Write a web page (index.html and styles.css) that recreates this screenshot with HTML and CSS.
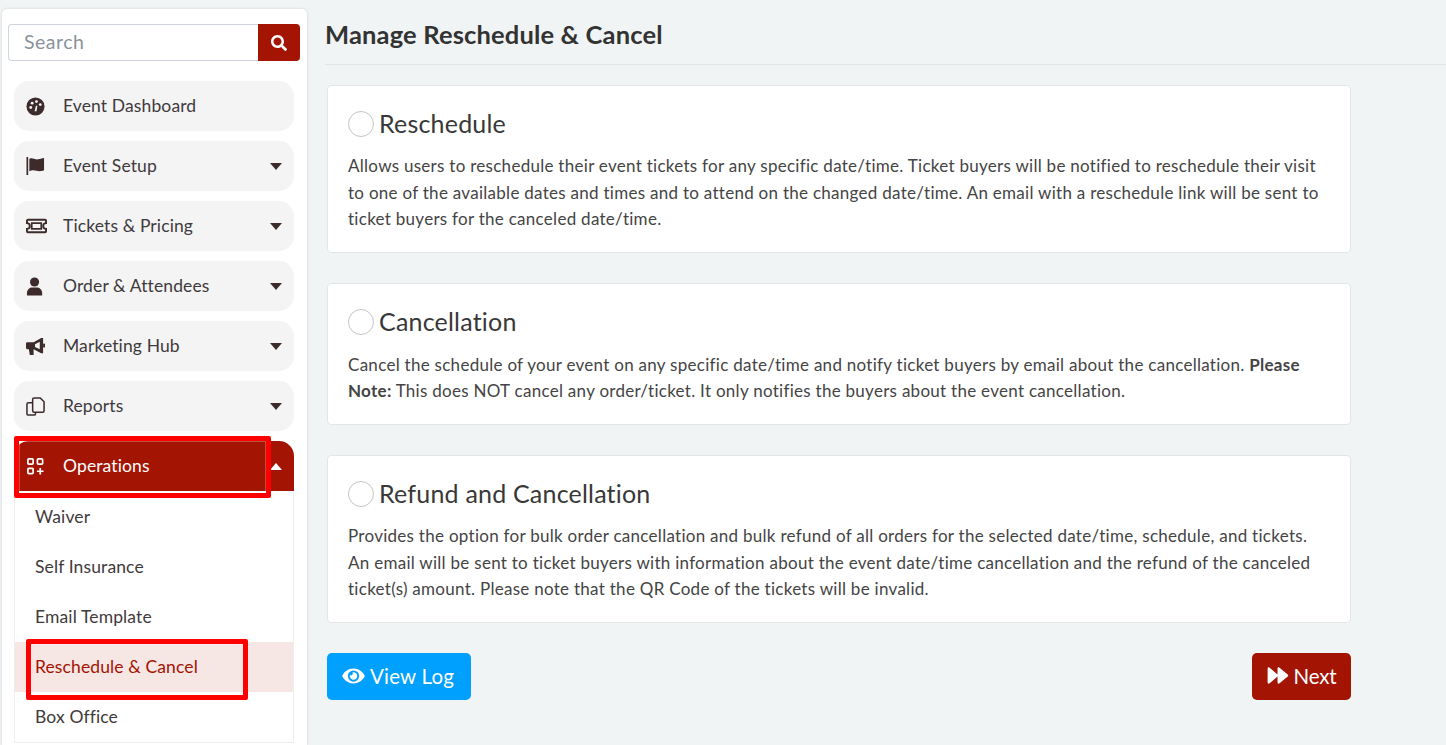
FILE: index.html
```html
<!DOCTYPE html>
<html lang="en">
<head>
<meta charset="utf-8">
<title>Manage Reschedule &amp; Cancel</title>
<link rel="stylesheet" href="styles.css">
</head>
<body>
<aside class="sidebar">
  <form class="search">
    <input class="search-input" type="text" placeholder="Search">
    <button class="search-btn" type="button" aria-label="Search">
      <svg viewBox="0 0 512 512" width="16" height="16"><path fill="#fff" d="M505 442.700L405.300 343c-4.500-4.500-10.600-7-17-7H372c27.600-35.300 44-79.700 44-128C416 93.100 322.900 0 208 0S0 93.100 0 208s93.100 208 208 208c48.300 0 92.700-16.400 128-44v16.300c0 6.400 2.500 12.500 7 17l99.700 99.700c9.400 9.400 24.600 9.400 33.900 0l28.300-28.300c9.400-9.400 9.400-24.600.1-34zM208 336c-70.700 0-128-57.200-128-128 0-70.700 57.200-128 128-128 70.700 0 128 57.200 128 128 0 70.700-57.200 128-128 128z"/></svg>
    </button>
  </form>
  <nav class="menu">
    <a class="item">
      <svg class="ico" viewBox="0 0 20 20"><circle cx="10" cy="10" r="9.500" fill="#3d2b2b"/><circle cx="5" cy="11" r="1.500" fill="#f4f4f5"/><circle cx="6.500" cy="6.500" r="1.500" fill="#f4f4f5"/><circle cx="11" cy="4.800" r="1.500" fill="#f4f4f5"/><circle cx="15" cy="8" r="1.500" fill="#f4f4f5"/><path d="M9 15l1.500-6 1.500.5-1 5.500z" fill="#f4f4f5"/></svg>
      <span class="label">Event Dashboard</span>
    </a>
    <a class="item">
      <svg class="ico" viewBox="0 0 20 20"><rect x="0.500" y="0" width="1.800" height="19" fill="#3d2b2b"/><path d="M3.500 2c3-1.500 5 .5 7.500.5S15 2 19 1v13c-4 1.500-6 .8-8 .5s-4-1-7.500.5z" fill="#3d2b2b"/></svg>
      <span class="label">Event Setup</span><i class="caret"></i>
    </a>
    <a class="item">
      <svg class="ico ico-wide" viewBox="0 0 22 16"><path d="M2 1.500h18a1 1 0 0 1 1 1V5a3 3 0 0 0 0 6v2.500a1 1 0 0 1-1 1H2a1 1 0 0 1-1-1V11a3 3 0 0 0 0-6V2.500a1 1 0 0 1 1-1z" fill="none" stroke="#3d2b2b" stroke-width="2"/><rect x="6" y="5" width="10" height="6" fill="none" stroke="#3d2b2b" stroke-width="1.800"/></svg>
      <span class="label">Tickets &amp; Pricing</span><i class="caret"></i>
    </a>
    <a class="item">
      <svg class="ico" viewBox="0 0 20 20"><circle cx="9" cy="5.200" r="4.800" fill="#3d2b2b"/><path d="M1 19.500v-2.500c0-4 3-6 5.500-6h5c2.500 0 5.500 2 5.500 6v2.500z" fill="#3d2b2b"/></svg>
      <span class="label">Order &amp; Attendees</span><i class="caret"></i>
    </a>
    <a class="item">
      <svg class="ico" viewBox="0 0 20 20"><path d="M0 7c0-1 .8-1.500 1.500-1.500H8L16 1h2v16h-2l-8-4v6H4l-1-6H1.500C.8 13 0 12 0 11z" fill="#3d2b2b"/><path d="M14.500 5v8L9.500 10.500v-3z" fill="#f4f4f5"/><rect x="18" y="7" width="2" height="4" fill="#3d2b2b"/></svg>
      <span class="label">Marketing Hub</span><i class="caret"></i>
    </a>
    <a class="item">
      <svg class="ico" viewBox="0 0 20 20" fill="none" stroke="#3d2b2b" stroke-width="1.600"><path d="M7 6H2.500A1.500 1.500 0 0 0 1 7.500v10A1.500 1.500 0 0 0 2.500 19h6a1.500 1.500 0 0 0 1.500-1.500V16"/><path d="M8.500 1H15l4 4v9.500a1.500 1.500 0 0 1-1.500 1.500h-9A1.500 1.500 0 0 1 7 14.500v-12A1.500 1.500 0 0 1 8.500 1z"/></svg>
      <span class="label">Reports</span><i class="caret"></i>
    </a>
    <div class="group">
      <a class="item item-open">
        <svg class="ico" viewBox="0 0 20 20" fill="none" stroke="#fff" stroke-width="1.800"><rect x="2" y="2" width="5.500" height="5.500" rx="1"/><rect x="12" y="2" width="5.500" height="5.500" rx="1"/><rect x="2" y="12" width="5.500" height="5.500" rx="1"/><path d="M15 11.500v7M11.500 15h7"/></svg>
        <span class="label">Operations</span><i class="caret caret-up"></i>
      </a>
      <div class="submenu">
        <a class="sub">Waiver</a>
        <a class="sub">Self Insurance</a>
        <a class="sub">Email Template</a>
        <a class="sub sub-active">Reschedule &amp; Cancel</a>
        <a class="sub">Box Office</a>
      </div>
      <div class="mark mark-ops"></div>
      <div class="mark mark-sub"></div>
    </div>
  </nav>
</aside>
<main class="content">
  <h1 class="page-title">Manage Reschedule &amp; Cancel</h1>
  <div class="cards">
    <section class="card">
      <label class="card-head"><span class="radio"></span>Reschedule</label>
      <p class="card-text">Allows users to reschedule their event tickets for any specific date/time. Ticket buyers will be notified to reschedule their visit<br>to one of the available dates and times and to attend on the changed date/time. An email with a reschedule link will be sent to<br>ticket buyers for the canceled date/time.</p>
    </section>
    <section class="card">
      <label class="card-head"><span class="radio"></span>Cancellation</label>
      <p class="card-text">Cancel the schedule of your event on any specific date/time and notify ticket buyers by email about the cancellation. <b>Please<br>Note:</b> This does NOT cancel any order/ticket. It only notifies the buyers about the event cancellation.</p>
    </section>
    <section class="card">
      <label class="card-head"><span class="radio"></span>Refund and Cancellation</label>
      <p class="card-text">Provides the option for bulk order cancellation and bulk refund of all orders for the selected date/time, schedule, and tickets.<br>An email will be sent to ticket buyers with information about the event date/time cancellation and the refund of the canceled<br>ticket(s) amount. Please note that the QR Code of the tickets will be invalid.</p>
    </section>
    <div class="actions">
      <button class="btn btn-log" type="button">
        <svg viewBox="0 0 576 512" width="23" height="20"><path fill="#fff" d="M572.500 241.400C518.300 135.600 410.900 64 288 64S57.700 135.600 3.500 241.400a32.400 32.400 0 0 0 0 29.200C57.700 376.400 165.100 448 288 448s230.300-71.600 284.500-177.400a32.400 32.400 0 0 0 0-29.200zM288 400a144 144 0 1 1 144-144 143.900 143.900 0 0 1-144 144zm0-240a95.300 95.300 0 0 0-25.300 3.800 47.900 47.900 0 0 1-66.900 66.900A95.800 95.800 0 1 0 288 160z"/></svg>
        View Log
      </button>
      <button class="btn btn-next" type="button">
        <svg viewBox="0 0 22 18" width="22" height="17"><path fill="#fff" d="M0 1.500C0 .5 1 0 1.800.5L10.500 8v-6.500C10.500.5 11.500 0 12.300.5l9 7.500c.7.500.7 1.500 0 2l-9 7.500c-.8.500-1.800 0-1.800-1V10l-8.700 7.500C1 18 0 17.500 0 16.500z"/></svg>
        Next
      </button>
    </div>
  </div>
</main>
</body>
</html>
```
FILE: styles.css
```css
* { box-sizing: border-box; }
html, body { height: 100%; }
body {
  margin: 0;
  height: 745px;
  overflow: hidden;
  display: flex;
  align-items: flex-start;
  background: #f1f4f5;
  font-family: "Lato", "Open Sans", sans-serif;
  color: #3d3d3d;
  padding-left: 2px;
}
.sidebar {
  width: 305px;
  flex: none;
  height: 736px;
  margin-top: 9px;
  padding: 15px 7px 0 6px;
  background: #fff;
  border-radius: 5px 5px 0 0;
  box-shadow: 0 0 3px rgba(0,0,0,.14);
}
.search { display: flex; height: 37px; }
.search-input {
  flex: 1;
  min-width: 0;
  padding: 0 15px 2px;
  font: 19.500px "Lato", sans-serif;
  letter-spacing: .5px;
  color: #444;
  border: 1px solid #ced4da;
  border-right: 0;
  border-radius: 4px 0 0 4px;
  outline: 0;
}
.search-input::placeholder { color: #8a939b; opacity: 1; }
.search-btn {
  width: 42px;
  flex: none;
  display: flex;
  align-items: center;
  justify-content: center;
  padding: 0;
  border: 0;
  border-radius: 0 4px 4px 0;
  background: #a31403;
}
.menu {
  display: flex;
  flex-direction: column;
  gap: 10px;
  margin: 20px 0 0;
  padding: 0 6px;
}
.item {
  display: flex;
  align-items: center;
  height: 50px;
  padding: 0 12px;
  border-radius: 15px;
  background: #f4f4f5;
  color: #3f3a3c;
  font-size: 17.500px;
  letter-spacing: .12px;
}
.ico { width: 19px; height: 19px; flex: none; margin-right: 18px; }
.ico-wide { width: 21px; height: 16px; margin-right: 16px; }
.label { flex: 1; padding-bottom: 2px; }
.caret {
  width: 0;
  height: 0;
  border-left: 6.500px solid transparent;
  border-right: 6.500px solid transparent;
  border-top: 7px solid #3d2b2b;
}
.caret-up { border-top: 0; border-bottom: 7px solid #fff; }
.group { position: relative; }
.item-open {
  background: #a31403;
  color: #fff;
  border-radius: 15px 15px 0 0;
}
.submenu {
  border: 1px solid #eeeeee;
  border-top: 0;
  padding-top: 1px;
}
.sub {
  display: flex;
  align-items: center;
  height: 50px;
  padding: 0 0 2px 20px;
  font-size: 17.500px;
  letter-spacing: .12px;
  color: #3f3a3c;
}
.sub-active { background: #f6e6e4; color: #a31403; }
.mark {
  position: absolute;
  border: 5px solid #fe0000;
  border-radius: 2px;
  box-shadow: inset 0 0 0 1px rgba(255,255,255,.25);
  pointer-events: none;
}
.mark-ops { left: 0; top: -5px; width: 257px; height: 62px; }
.mark-sub { left: 12px; top: 198px; width: 222px; height: 61px; }
.content { flex: 1; min-width: 0; padding-left: 18px; }
.page-title {
  margin: 0;
  height: 65px;
  padding: 19px 0 0;
  font-size: 25.500px;
  letter-spacing: .16px;
  font-weight: 700;
  line-height: 30px;
  color: #333;
  border-bottom: 1px solid #e2e4e5;
}
.cards { width: 1024px; margin: 20px 0 0 2px; display: flex; flex-direction: column; gap: 30px; }
.card {
  background: #fff;
  border: 1px solid #e3e5e6;
  border-radius: 4px;
  padding: 19px 20px 19.600px;
}
.card-head {
  display: flex;
  align-items: center;
  gap: 5px;
  height: 36px;
  font-size: 25px;
  letter-spacing: .2px;
  color: #383838;
}
.radio {
  width: 26px;
  height: 26px;
  margin-top: 2px;
  background: #fff;
  border: 1px solid #c4c4c4;
  border-radius: 50%;
}
.card-text {
  margin: 12.400px 0 0;
  font-size: 17px;
  letter-spacing: .28px;
  line-height: 26.400px;
  color: #444;
}
.actions { display: flex; justify-content: space-between; }
.btn {
  height: 47px;
  display: flex;
  align-items: center;
  justify-content: center;
  gap: 5px;
  padding: 0 0 2px;
  border: 0;
  border-radius: 5px;
  color: #fff;
  font-family: inherit;
  font-size: 20.500px;
  letter-spacing: .2px;
}
.btn-log { width: 144px; padding-right: 2px; background: #00a0fe; }
.btn-next { width: 99px; letter-spacing: -.2px; background: #a31403; }
```
